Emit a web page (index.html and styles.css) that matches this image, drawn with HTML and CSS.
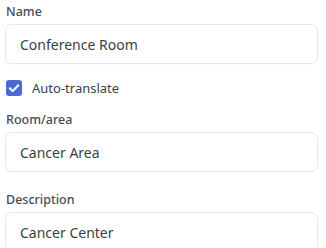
FILE: index.html
```html
<!DOCTYPE html>
<html>
<head>
<meta charset="utf-8">
<link rel="stylesheet" href="styles.css">
</head>
<body>
<form class="form">
  <div class="field">
    <div class="label">Name</div>
    <div class="input">Conference Room</div>
    <div class="check-row">
      <span class="checkbox">
        <svg viewBox="0 0 16 16" width="16" height="16"><path d="M3.8 8.3 L6.7 11.1 L12.3 5.2" fill="none" stroke="#fff" stroke-width="2" stroke-linecap="round" stroke-linejoin="round"/></svg>
      </span>
      <span class="check-label">Auto-translate</span>
    </div>
  </div>
  <div class="field field-plain">
    <div class="label">Room/area</div>
    <div class="input">Cancer Area</div>
  </div>
  <div class="field field-plain">
    <div class="label">Description</div>
    <div class="input">Cancer Center</div>
  </div>
</form>
</body>
</html>
```
FILE: styles.css
```css
html, body {
  margin: 0;
  padding: 0;
  background: #ffffff;
}
body {
  font-family: "Noto Sans", "Open Sans", sans-serif;
  width: 326px;
  height: 248px;
  overflow: hidden;
}
.form {
  padding: 3px 8px 0 5px;
  display: flex;
  flex-direction: column;
  gap: 15px;
}
.field {
  display: flex;
  flex-direction: column;
}
.field-plain {
  padding-bottom: 4px;
}
.label {
  font-size: 12.5px;
  font-weight: 500;
  color: #474c54;
  line-height: 17px;
  padding-left: 1px;
  margin-bottom: 4px;
}
.input {
  box-sizing: border-box;
  height: 40px;
  border: 1px solid #e7e8ea;
  border-radius: 7px;
  padding-left: 14px;
  display: flex;
  align-items: center;
  font-size: 14px;
  color: #3a3f45;
  box-shadow: 0 1px 1px rgba(0,0,0,0.02);
}
.check-row {
  display: flex;
  align-items: center;
  gap: 10px;
  margin-top: 16px;
  padding-left: 1px;
  height: 16px;
}
.checkbox {
  width: 16px;
  height: 16px;
  border-radius: 3px;
  background: #4a6cd2;
  display: flex;
  align-items: center;
  justify-content: center;
}
.check-label {
  font-size: 13px;
  color: #3a3f45;
  line-height: 16px;
}
```
